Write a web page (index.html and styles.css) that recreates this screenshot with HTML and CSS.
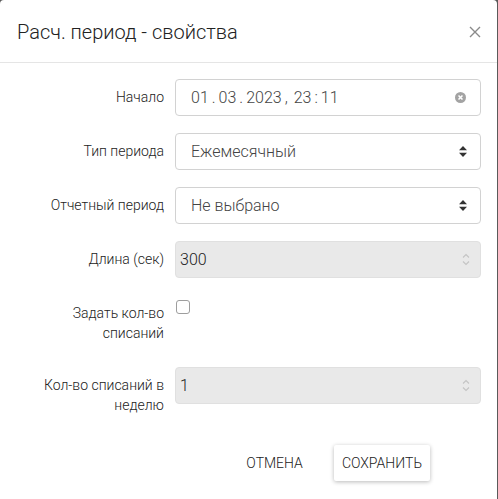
FILE: index.html
```html
<!DOCTYPE html>
<html lang="ru">
<head>
<meta charset="utf-8">
<title>Расч. период - свойства</title>
<link rel="stylesheet" href="styles.css">
</head>
<body>
<div class="modal">
  <div class="modal-header">
    <h4 class="modal-title">Расч. период - свойства</h4>
    <button class="close" type="button" aria-label="Закрыть">
      <svg width="12" height="12" viewBox="0 0 12 12"><path d="M1 1 L11 11 M11 1 L1 11" stroke="#8a8a8a" stroke-width="1.4" fill="none"/></svg>
    </button>
  </div>
  <div class="modal-body">
    <div class="form">
      <label class="lbl">Начало</label>
      <div class="field">
        <span class="val date">01<span class="sep">.</span>03<span class="sep">.</span>2023<span class="sep comma">,</span>23<span class="sep">:</span>11</span>
        <svg class="clear" width="11" height="11" viewBox="0 0 10 10"><circle cx="5" cy="5" r="5" fill="#a3a3a3"/><path d="M3.2 3.2 L6.8 6.8 M6.8 3.2 L3.2 6.8" stroke="#fff" stroke-width="1.4"/></svg>
      </div>

      <label class="lbl">Тип периода</label>
      <div class="field">
        <span class="val">Ежемесячный</span>
        <svg class="caret" width="8" height="11" viewBox="0 0 8 11"><path d="M4 0 L8 4.3 H0 Z M0 6.7 H8 L4 11 Z" fill="#333"/></svg>
      </div>

      <label class="lbl">Отчетный период</label>
      <div class="field">
        <span class="val">Не выбрано</span>
        <svg class="caret" width="8" height="11" viewBox="0 0 8 11"><path d="M4 0 L8 4.3 H0 Z M0 6.7 H8 L4 11 Z" fill="#333"/></svg>
      </div>

      <label class="lbl">Длина (сек)</label>
      <div class="field disabled">
        <span class="val">300</span>
        <svg class="spin" width="8" height="13" viewBox="0 0 8 13"><path d="M1 4.5 L4 1.5 L7 4.5 M1 8.5 L4 11.5 L7 8.5" stroke="#c4c4c4" stroke-width="1.1" fill="none"/></svg>
      </div>

      <label class="lbl">Задать кол-во списаний</label>
      <div class="check-cell"><span class="checkbox"></span></div>

      <label class="lbl">Кол-во списаний в неделю</label>
      <div class="field disabled">
        <span class="val">1</span>
        <svg class="spin" width="8" height="13" viewBox="0 0 8 13"><path d="M1 4.5 L4 1.5 L7 4.5 M1 8.5 L4 11.5 L7 8.5" stroke="#c4c4c4" stroke-width="1.1" fill="none"/></svg>
      </div>
    </div>
  </div>
  <div class="modal-footer">
    <button class="btn btn-flat" type="button">Отмена</button>
    <button class="btn btn-raised" type="button">Сохранить</button>
  </div>
</div>
</body>
</html>
```

FILE: styles.css
```css
html, body {
  margin: 0;
  padding: 0;
}
body {
  background: #5a5a5a;
  font-family: Roboto, "Liberation Sans", Arial, sans-serif;
  font-weight: 300;
  color: #333;
  width: 498px;
  height: 499px;
  overflow: hidden;
}
.modal {
  background: #fff;
  width: 497px;
  height: 520px;
  border-radius: 4px 4px 0 0;
}
.modal-header {
  box-sizing: border-box;
  height: 63px;
  border-bottom: 1px solid #e5e5e5;
  display: flex;
  align-items: center;
  justify-content: space-between;
  padding: 2px 16px 0 17px;
}
.modal-title {
  margin: 0;
  font-size: 20px;
  font-weight: 300;
  line-height: 28px;
  color: #222;
}
.close {
  background: none;
  border: 0;
  padding: 0;
  width: 12px;
  height: 12px;
  display: flex;
  cursor: pointer;
}
.modal-body {
  padding-top: 16px;
}
.form {
  display: grid;
  grid-template-columns: 164px 306px;
  column-gap: 11px;
  row-gap: 17px;
  align-items: start;
}
.lbl {
  font-size: 14px;
  line-height: 20px;
  padding: 8px 0 7px 15px;
  text-align: right;
  color: #222;
}
.field {
  height: 37px;
  box-sizing: border-box;
  border: 1px solid #d2d2d2;
  border-radius: 4px;
  display: flex;
  align-items: center;
  padding: 0 13px 0 15px;
  font-size: 16px;
  color: #444;
}
.val {
  flex: 1;
  white-space: nowrap;
}
.date .sep {
  margin: 0 3px;
}
.date .comma {
  margin: 0 6px 0 3px;
}
.clear {
  margin-right: 1px;
}
.field.disabled {
  background: #e9e9e9;
  color: #222;
  padding: 0 10px 0 4px;
  border-color: #e0e0e0;
}
.check-cell {
  padding-top: 5px;
}
.checkbox {
  display: block;
  width: 14px;
  height: 14px;
  box-sizing: border-box;
  border: 1px solid #9e9e9e;
  border-radius: 3px;
  margin-left: 1px;
}
.modal-footer {
  display: flex;
  justify-content: flex-end;
  gap: 23px;
  padding: 23px 67px 0 0;
}
.btn {
  font-family: Roboto, "Liberation Sans", Arial, sans-serif;
  font-weight: 300;
  font-size: 14px;
  text-transform: uppercase;
  color: #222;
  height: 36px;
  padding: 0 8px;
  border: 0;
  background: #fff;
  border-radius: 2px;
  cursor: pointer;
}
.btn-raised {
  box-shadow: 0 1px 4px rgba(0, 0, 0, 0.28);
}
```
